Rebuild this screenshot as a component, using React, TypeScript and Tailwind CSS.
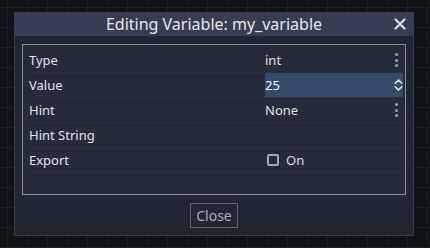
import { FC } from "react";

const font = { fontFamily: '"Noto Sans", "Open Sans", sans-serif' };

const Dots: FC = () => (
  <div className="flex flex-col items-center gap-[2.5px] mr-[5px]">
    <span className="w-[3px] h-[3px] rounded-full bg-[#9ea2aa]" />
    <span className="w-[3px] h-[3px] rounded-full bg-[#9ea2aa]" />
    <span className="w-[3px] h-[3px] rounded-full bg-[#9ea2aa]" />
  </div>
);

const UpDown: FC = () => (
  <svg width="9" height="14" viewBox="0 0 9 14" fill="none">
    <path d="M1.2 5.2 L4.5 2 L7.8 5.2" stroke="#e4e6ea" strokeWidth="1.6" strokeLinecap="round" strokeLinejoin="round" />
    <path d="M1.2 8.8 L4.5 12 L7.8 8.8" stroke="#e4e6ea" strokeWidth="1.6" strokeLinecap="round" strokeLinejoin="round" />
  </svg>
);

const Row: FC<{ label: string; children?: React.ReactNode; active?: boolean }> = ({
  label,
  children,
  active,
}) => (
  <div className="flex h-[25px] border-b border-[#2d3240]">
    <div className="w-[237px] flex items-center pl-px">{label}</div>
    <div
      className={`flex-1 flex items-center justify-between ${
        active ? "bg-[#354a6c]" : ""
      }`}
    >
      {children}
    </div>
  </div>
);

const App: FC = () => {
  return (
    <div
      className="w-[430px] h-[248px] overflow-hidden bg-[#0f1217] bg-[linear-gradient(to_right,#1c2027_1px,transparent_1px),linear-gradient(to_bottom,#1c2027_1px,transparent_1px)] bg-[size:20px_20px] bg-[position:7px_7px] pt-[12px] pl-[14px] leading-none"
      style={font}
    >
      <div className="w-[400px]">
        {/* title bar */}
        <div className="h-[24px] bg-[#363d52] relative flex items-center justify-center text-[#e6e8ec] text-[16px]">
          <span>Editing Variable: my_variable</span>
          <svg
            width="12"
            height="12"
            viewBox="0 0 12 12"
            className="absolute right-[8px] top-[6px]"
          >
            <path d="M1.5 1.5 L10.5 10.5 M10.5 1.5 L1.5 10.5" stroke="#e6e8ec" strokeWidth="2" strokeLinecap="round" />
          </svg>
        </div>

        {/* body */}
        <div className="bg-[#212633] border-x border-b border-[#363d52] px-[7px] pt-2 pb-[7px] flex flex-col items-center">
          <div className="w-[384px] h-[151px] border border-[#8c9099] bg-[#252b39] pt-[3px] pl-[5px] pr-[2px] text-[13px] text-[#e2e4e8]">
            <Row label="Type">
              <span>int</span>
              <Dots />
            </Row>
            <Row label="Value" active>
              <span className="text-[#eef0f3]">25</span>
              <UpDown />
            </Row>
            <Row label="Hint">
              <span>None</span>
              <Dots />
            </Row>
            <Row label="Hint String" />
            <Row label="Export">
              <div className="flex items-center gap-[7px] pl-[2px]">
                <span className="w-[12px] h-[12px] border-2 border-[#a4a8af] rounded-[2px]" />
                <span className="text-[#dcdee2]">On</span>
              </div>
            </Row>
          </div>
          <button className="mt-2 h-[25px] w-[48px] border border-[#5f6470] text-[#aeb2ba] text-[14px] flex items-center justify-center">
            Close
          </button>
        </div>
      </div>
    </div>
  );
};

export default App;
